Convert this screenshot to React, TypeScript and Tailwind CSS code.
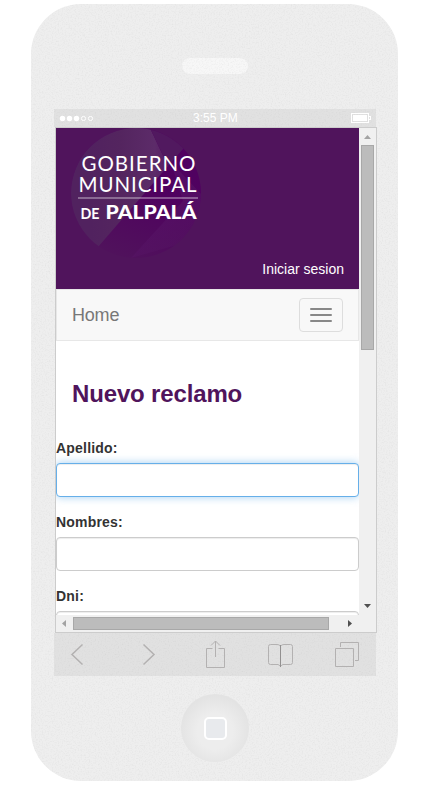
import React from "react";

function Logo() {
  return (
    <svg width="130" height="130" viewBox="0 0 130 130" className="block">
      <defs>
        <clipPath id="disc">
          <circle cx="65" cy="65" r="65" />
        </clipPath>
        <linearGradient id="sheen" gradientUnits="userSpaceOnUse" x1="20" y1="40" x2="95" y2="40">
          <stop offset="0" stopColor="#51225f" />
          <stop offset="0.4" stopColor="#54255f" />
          <stop offset="0.85" stopColor="#5c2b69" />
          <stop offset="1" stopColor="#581d65" />
        </linearGradient>
        <linearGradient id="deep" x1="0.8" y1="0" x2="0.4" y2="1">
          <stop offset="0" stopColor="#500061" />
          <stop offset="0.5" stopColor="#50025f" />
          <stop offset="1" stopColor="#50125c" />
        </linearGradient>
        <linearGradient id="edge" x1="0.2" y1="0" x2="0.8" y2="1">
          <stop offset="0" stopColor="#5c1270" />
          <stop offset="1" stopColor="#52145e" />
        </linearGradient>
      </defs>
      <g clipPath="url(#disc)">
        <rect width="130" height="130" fill="url(#deep)" />
        <path d="M0 0H79L97 38L27 119L0 105Z" fill="url(#sheen)" />
        <path d="M79 0H130V10L113 20L97 38Z" fill="#51195f" />
        <path d="M100 34L130 66V110L60 130L112 73Z" fill="url(#edge)" opacity=".6" />
      </g>
      <g fill="#fff" fontFamily="Lato, sans-serif">
        <text x="10.5" y="42.5" fontSize="20.5" textLength="114" lengthAdjust="spacing">GOBIERNO</text>
        <text x="7.5" y="64.4" fontSize="20.5" textLength="118" lengthAdjust="spacing">MUNICIPAL</text>
        <rect x="7" y="69.5" width="120" height="1" opacity=".65" />
        <text x="9.5" y="91.4" fontSize="15" fontWeight="700" textLength="19" lengthAdjust="spacingAndGlyphs">DE</text>
        <text x="34.5" y="91.4" fontSize="19.5" fontWeight="900" textLength="91" lengthAdjust="spacingAndGlyphs">PALPALÁ</text>
      </g>
    </svg>
  );
}

function Grain() {
  return (
    <svg className="pointer-events-none absolute inset-0 h-full w-full">
      <filter id="grain">
        <feTurbulence type="fractalNoise" baseFrequency="0.7" numOctaves="2" seed="4" />
        <feColorMatrix values="0 0 0 0 0.45  0 0 0 0 0.45  0 0 0 0 0.45  0.35 0 0 0 -0.155" />
      </filter>
      <rect width="100%" height="100%" filter="url(#grain)" />
    </svg>
  );
}

function StatusBar() {
  return (
    <div className="relative flex h-[18px] items-center bg-black/5 text-white">
      <svg width="36" height="18" className="ml-[5px]" fill="#fff">
        <circle cx="3.5" cy="9.5" r="2.7" />
        <circle cx="10.5" cy="9.5" r="2.7" />
        <circle cx="17.5" cy="9.5" r="2.7" />
        <circle cx="24.5" cy="9.5" r="2.1" fill="none" stroke="#fff" />
        <circle cx="31.5" cy="9.5" r="2.1" fill="none" stroke="#fff" />
      </svg>
      <span className="ml-[98px] text-[12px] leading-[18px]">3:55 PM</span>
      <svg width="20" height="10" className="mr-[5px] ml-auto" fill="none" shapeRendering="crispEdges">
        <rect x=".5" y=".5" width="17" height="9" stroke="#fff" />
        <rect x="2" y="2" width="14" height="6" fill="#fff" />
        <path d="M18 3.5H19.5V6.5H18" stroke="#fff" />
      </svg>
    </div>
  );
}

function Field({ label, focused = false }: { label: string; focused?: boolean }) {
  return (
    <div className="mb-[15px]">
      <label className="mb-[5px] block text-[14px] leading-5 font-bold tracking-[0.2px] text-[#333]">{label}</label>
      <input
        className={
          focused
            ? "block h-[34px] w-full rounded-[4px] border border-[#66afe9] bg-white px-3 shadow-[inset_0_1px_1px_rgba(0,0,0,0.075),0_0_8px_rgba(102,175,233,0.6)] outline-none"
            : "block h-[34px] w-full rounded-[4px] border border-[#ccc] bg-white px-3 shadow-[inset_0_1px_1px_rgba(0,0,0,0.075)] outline-none"
        }
      />
    </div>
  );
}

function Page() {
  return (
    <div className="h-[487px] w-[303px] overflow-hidden bg-white">
      <header className="flex h-[161px] flex-col bg-[#50145c] px-[15px]">
        <Logo />
        <a className="mt-px self-end text-[14px] leading-5 text-white">Iniciar sesion</a>
      </header>
      <nav className="flex h-[52px] items-center justify-between border border-[#e7e7e7] bg-[#f8f8f8] px-[15px]">
        <span className="text-[18px] leading-5 tracking-[-0.2px] text-[#777]">Home</span>
        <button className="flex h-[34px] w-11 flex-col items-center justify-center gap-1 rounded-[4px] border border-[#ddd]">
          <span className="h-[2px] w-[22px] rounded-[1px] bg-[#888]" />
          <span className="h-[2px] w-[22px] rounded-[1px] bg-[#888]" />
          <span className="h-[2px] w-[22px] rounded-[1px] bg-[#888]" />
        </button>
      </nav>
      <h3 className="mt-10 mb-[31px] ml-4 text-[24px] leading-[26px] font-bold tracking-[-0.15px] text-[#50145c]">Nuevo reclamo</h3>
      <Field label="Apellido:" focused />
      <Field label="Nombres:" />
      <Field label="Dni:" />
    </div>
  );
}

function Toolbar() {
  return (
    <div className="flex h-[43px] items-start bg-black/5">
      <svg width="322" height="43" fill="none" stroke="#b3b1b1">
        <path d="M28.5 11.5L18 21.5L28.5 31.5M89.5 11.5L100 21.5L89.5 31.5" strokeWidth="1.5" />
        <path d="M158.5 15.5H152.5V34.5H170.5V15.5H164.5M161.5 24V8M157 12.5L161.5 8L166 12.5" />
        <path d="M226.5 33V13Q225 11.5 223 11.5H216.5Q214.5 11.5 214.5 13.5V29.5Q214.5 31.5 216.5 31.5H224L226.5 33L229 31.5H236.5Q238.5 31.5 238.5 29.5V13.5Q238.5 11.5 236.5 11.5H230Q228 11.5 226.5 13" />
        <path d="M226.5 12V34" stroke="#929090" />
        <path d="M281.5 15.5H299.5V33.5H281.5ZM286.5 14V9.5H304.5V27.5H301" />
      </svg>
    </div>
  );
}

export default function App() {
  return (
    <div className="h-[797px] w-[429px] overflow-hidden bg-white pt-1 pl-[31px] font-['Liberation_Sans',Arial,sans-serif]">
      <main className="relative flex h-[777px] w-[367px] flex-col items-center overflow-hidden rounded-[50px] bg-[#eeeeee]">
        <Grain />
        <div className="mt-[54px] ml-px h-4 w-[66px] rounded-full bg-[#f7f7f7]/90" />
        <section className="relative mt-[35px] ml-px w-[322px]">
          <StatusBar />
          <div className="ml-px grid h-[506px] w-[322px] grid-cols-[303px_17px] grid-rows-[487px_17px] border border-[#ccc] bg-[#f0f0f0]">
            <Page />
            <div className="flex flex-col items-center">
              <svg width="17" height="17">
                <path d="M5 11H12L8.5 7Z" fill="#a3a3a3" />
              </svg>
              <div className="h-[205px] w-[13px] border border-[#a8a8a8] bg-[#bcbcbc]" />
              <svg width="17" height="17" className="mt-auto">
                <path d="M5 6H12L8.5 10Z" fill="#505050" />
              </svg>
            </div>
            <div className="flex items-center">
              <svg width="17" height="17">
                <path d="M10 5V12L6 8.5Z" fill="#a3a3a3" />
              </svg>
              <div className="h-[13px] w-[256px] border border-[#a8a8a8] bg-[#bcbcbc]" />
              <svg width="17" height="17" className="ml-auto">
                <path d="M6 5V12L10 8.5Z" fill="#505050" />
              </svg>
            </div>
          </div>
          <Toolbar />
        </section>
        <div className="relative mt-[18px] ml-px flex h-[68px] w-[68px] items-center justify-center rounded-full bg-[radial-gradient(circle_at_50%_55%,#ededed_35%,#e3e3e3_70%)]">
          <div className="ml-px h-[23px] w-[23px] rounded-[5px] border-2 border-white bg-[#e8eaed]" />
        </div>
      </main>
    </div>
  );
}
